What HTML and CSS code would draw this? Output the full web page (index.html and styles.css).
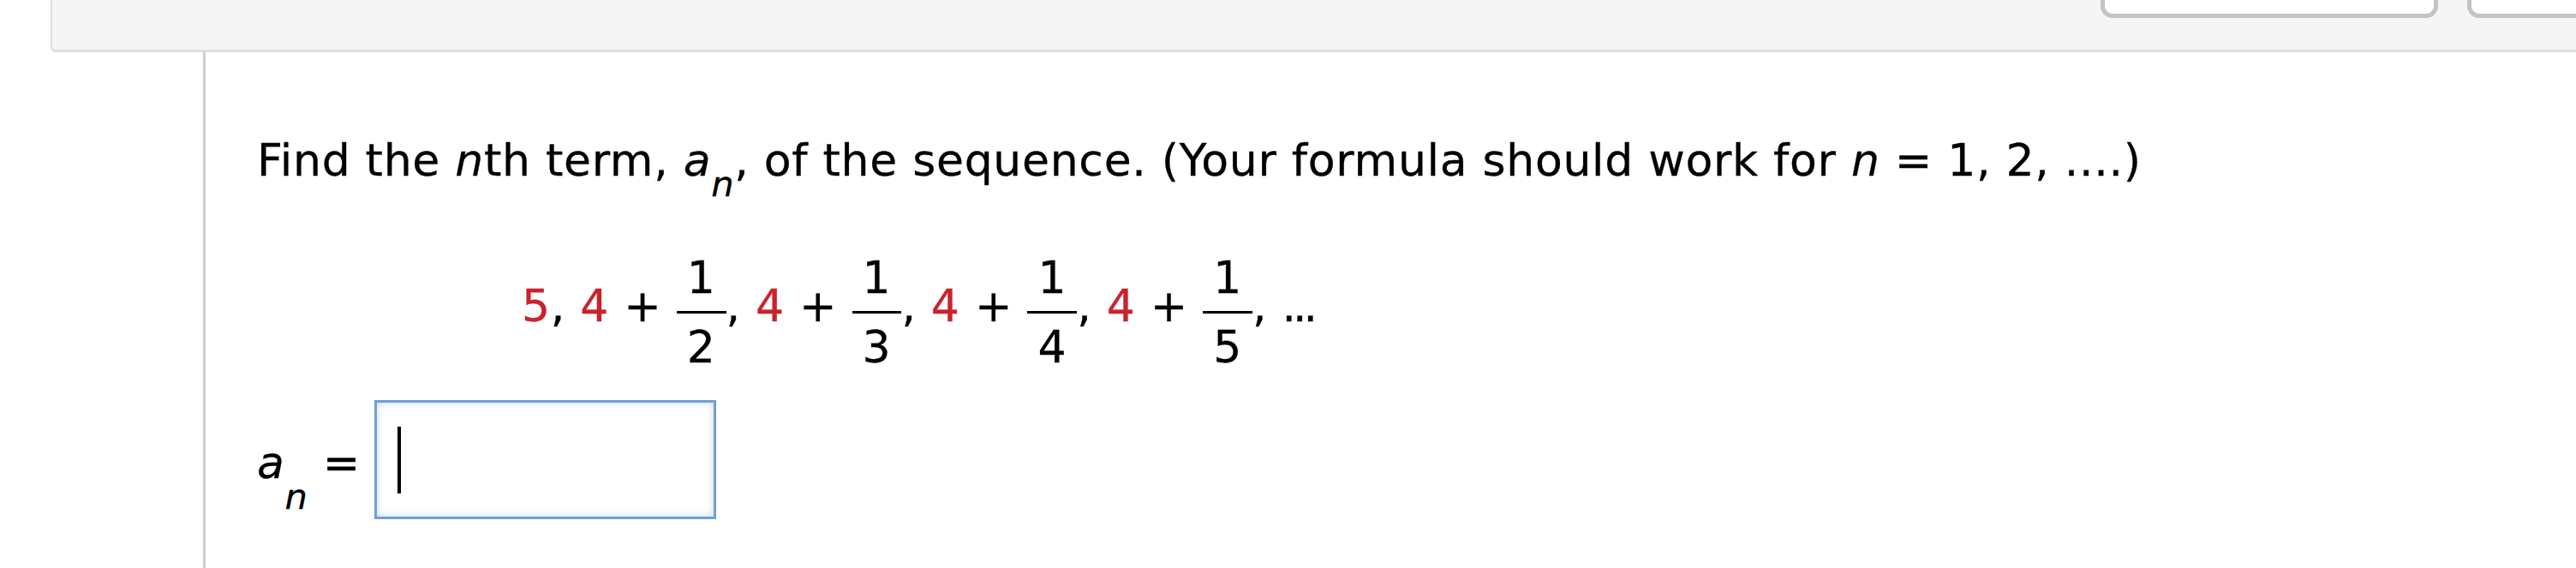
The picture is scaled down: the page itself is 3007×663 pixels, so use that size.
FILE: index.html
```html
<!DOCTYPE html>
<html lang="en">
<head>
    <meta charset="UTF-8">
    <title>Find the nth term</title>
    <link rel="stylesheet" href="styles.css">
</head>
<body>

<!-- thanh công cụ phía trên -->
<div class="topbar">
    <span class="tab"></span>
    <span class="tab tab-cut"></span>
</div>

<div class="main">
    <div class="gutter"></div>
    <div class="question">
        <p class="prompt">Find the <i>n</i>th term, <i>a<sub>n</sub></i>, of the sequence. (Your formula should work for <i>n</i> = 1, 2, ....)</p>

        <!-- dãy số -->
        <p class="sequence">
            <span class="red">5</span>, <span class="red">4</span> + <span class="frac"><span class="num">1</span><span class="den">2</span></span>, <span class="red">4</span> + <span class="frac"><span class="num">1</span><span class="den">3</span></span>, <span class="red">4</span> + <span class="frac"><span class="num">1</span><span class="den">4</span></span>, <span class="red">4</span> + <span class="frac"><span class="num">1</span><span class="den">5</span></span>, <span class="dots">...</span>
        </p>

        <div class="answer">
            <span class="answer-label"><i>a<sub>n</sub></i> =</span>
            <div class="answer-box"><span class="caret"></span></div>
        </div>
    </div>
</div>

</body>
</html>
```

FILE: styles.css
```css
body {
    margin: 0;
    font-family: "DejaVu Sans", Verdana, sans-serif;
    color: #000;
    background: #fff;
    letter-spacing: 0.7px;
    -webkit-text-stroke: 0.3px #000;
    overflow: hidden;
}
.topbar {
    margin-left: 59px;
    height: 58px;
    background: #f5f5f5;
    border-left: 2px solid #ddd;
    border-bottom: 3px solid #ddd;
    border-bottom-left-radius: 6px;
    display: flex;
    justify-content: flex-end;
    align-items: flex-start;
    gap: 34px;
}
.tab {
    box-sizing: border-box;
    width: 394px;
    height: 21px;
    background: #fff;
    border: 5px solid #c4c4c4;
    border-top: none;
    border-radius: 0 0 14px 14px;
}
.tab-cut {
    width: 127px;
    border-right: none;
    border-bottom-right-radius: 0;
}
.main {
    display: flex;
    min-height: 602px;
}
.gutter {
    width: 237px;
    border-right: 3px solid #ccc;
}
.question {
    padding: 95px 0 0 60px;
}
.prompt {
    margin: 0;
    font-size: 52px;
    line-height: 62px;
    white-space: nowrap;
}
sub {
    font-size: 0.8em;
    vertical-align: -24px;
    line-height: 0;
}
.sequence {
    margin: 80px 0 0 309px;
    font-size: 52px;
    line-height: 62px;
    white-space: nowrap;
}
.red {
    color: #c8232c;
    -webkit-text-stroke-color: #c8232c;
}
.frac {
    display: inline-flex;
    flex-direction: column;
    align-items: stretch;
    vertical-align: 33px;
    line-height: 52px;
    text-align: center;
}
.num {
    padding: 0 12px 13px;
    border-bottom: 3px solid #000;
}
.den {
    padding-top: 13px;
}
.dots {
    letter-spacing: -4px;
}
.answer {
    margin-top: 36px;
    display: flex;
    align-items: center;
}
.answer-label {
    font-size: 52px;
    line-height: 62px;
    margin-right: 16px;
    position: relative;
    top: 8px;
}
.answer-label sub {
    vertical-align: -36px;
}
.answer-box {
    box-sizing: border-box;
    width: 399px;
    height: 139px;
    border: 3px solid #739fd3;
    box-shadow: inset 0 0 10px #c4daf2;
    display: flex;
    align-items: center;
}
.caret {
    width: 4px;
    height: 78px;
    margin-left: 24px;
    background: #000;
}
```
